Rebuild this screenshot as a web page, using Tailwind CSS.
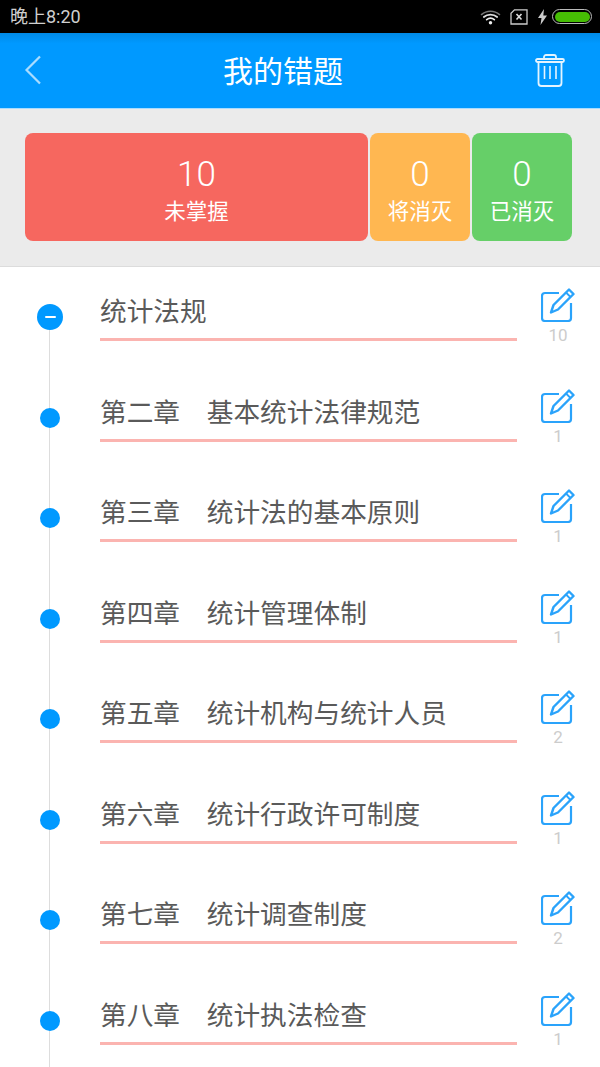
<!DOCTYPE html>
<html lang="zh-CN">
<head>
  <meta charset="UTF-8">
  <meta name="viewport" content="width=device-width,initial-scale=1.0">
  <title>我的错题</title>
  <script src="https://cdn.jsdelivr.net/npm/@tailwindcss/browser@4"></script>
</head>
<body class="bg-white h-[1067px] overflow-hidden font-['Roboto','Noto_Sans_CJK_SC',sans-serif]">
  <!-- Status bar -->
  <div class="h-[33px] bg-black flex items-center justify-between pl-[10px] pr-[8px] text-[#cfcfcf]">
    <span class="text-[18px] leading-none">晚上8:20</span>
    <div class="flex items-center">
      <svg class="w-[21px] h-[16px]" viewBox="0 0 22 16" fill="none" stroke-linecap="round">
        <path d="M1.500 5.500C7 .8 15 .8 20.500 5.500" stroke="#777" stroke-width="1.500"/>
        <path d="M4 8C8 4.600 14 4.600 18 8" stroke="#ddd" stroke-width="1.800"/>
        <path d="M7 10.800C9.500 8.800 12.500 8.800 15 10.800" stroke="#eee" stroke-width="1.800"/>
        <circle cx="11" cy="14" r="1.800" fill="#eee"/>
      </svg>
      <svg class="w-[18px] h-[16px] ml-[9px]" viewBox="0 0 18 16" fill="none">
        <path d="M4.500 .8H17V15H1V4.300Z" stroke="#ccc" stroke-width="1.300"/>
        <path d="M6.500 5 11.500 10.500M11.500 5 6.500 10.500" stroke="#ddd" stroke-width="1.600"/>
      </svg>
      <svg class="w-[9px] h-[16px] ml-[10px]" viewBox="0 0 9 16"><path d="M6 0 0 9H3.500L2.500 16 9 6.500H5.300Z" fill="#ccc"/></svg>
      <div class="ml-[5px] w-[40px] h-[15px] rounded-full border border-[#bbb] p-[1.500px]">
        <div class="h-full rounded-full bg-[#46bd04]"></div>
      </div>
    </div>
  </div>

  <!-- Header -->
  <div class="h-[75px] bg-gradient-to-b from-[#008ae6] from-0% to-[#0099ff] to-[14%] flex items-center justify-between pl-[24px] pr-[35px] pb-[2px]">
    <svg class="w-[18px] h-[30px]" viewBox="0 0 18 30" fill="none"><path d="M16 1.500 2.500 15 16 28.500" stroke="#a9dcff" stroke-width="2.200"/></svg>
    <h1 class="text-[30px] leading-none text-white mr-[11px] mt-[4px]">我的错题</h1>
    <svg class="w-[30px] h-[33px] mt-[1px]" viewBox="0 0 30 33" fill="none" stroke="#e4f4ff" stroke-width="1.800">
      <rect x="1" y="5" width="28" height="3" rx="1.500"/>
      <path d="M9 5V3C9 1.800 10 1 11 1H19C20 1 21 1.800 21 3V5M3.500 8V29C3.500 31 5 32 6.500 32H23.500C25 32 26.500 31 26.500 29V8"/>
      <path d="M9.500 12V25M15 12V25M21 12V25" stroke-width="1.600"/>
    </svg>
  </div>

  <!-- Summary -->
  <div class="h-[159px] bg-[#ebebeb] border-t border-t-[#a9dcff] border-b border-b-[#dcdcdc] pl-[25px] pr-[28px] pt-[24px]">
    <div class="flex gap-[2px] h-[108px] text-white text-center">
      <div class="w-[343px] bg-[#f6675f] rounded-[8px] pt-[22px]">
        <div class="text-[35px] leading-[40px] font-light">10</div>
        <div class="text-[21.500px] leading-[30px] mt-[2px]">未掌握</div>
      </div>
      <div class="w-[100px] bg-[#ffb751] rounded-[8px] pt-[22px]">
        <div class="text-[35px] leading-[40px] font-light">0</div>
        <div class="text-[21.500px] leading-[30px] mt-[2px]">将消灭</div>
      </div>
      <div class="w-[100px] bg-[#66cf68] rounded-[8px] pt-[22px]">
        <div class="text-[35px] leading-[40px] font-light">0</div>
        <div class="text-[21.500px] leading-[30px] mt-[2px]">已消灭</div>
      </div>
    </div>
  </div>

  <!-- Chapter list -->
  <div class="relative h-[800px] overflow-hidden">
    <!-- Timeline -->
    <div class="absolute left-[49px] top-[60px] w-px h-[800px] bg-[#dddddd]"></div>

    <div class="relative h-[100.500px] flex">
      <div class="w-[100px] flex justify-center items-center">
        <div class="w-[26px] h-[26px] rounded-full bg-[#0099ff] flex items-center justify-center">
          <div class="w-[11px] h-[2px] bg-white rounded-full"></div>
        </div>
      </div>
      <div class="w-[417px] h-[74px] border-b-[3px] border-[#fbb4b0] text-[26.700px] leading-[91px] text-[#5a5a5a] whitespace-nowrap">统计法规</div>
      <div class="w-[83px] flex flex-col items-center pt-[21px] pr-[1px]">
        <svg class="w-[34px] h-[34px]" viewBox="0 0 34 34" fill="none"><path d="M18 5H4C2.300 5 1 6.300 1 8V30C1 31.700 2.300 33 4 33H27C28.700 33 30 31.700 30 30V15" stroke="#2aa3fb" stroke-width="2.200"/><path d="M28 1.500 32.500 6 17 21.500 10 24.500 12.500 17Z" stroke="#2aa3fb" stroke-width="2.400" stroke-linejoin="round"/><path d="M25 4.500 29.500 9" stroke="#2aa3fb" stroke-width="1.800"/></svg>
        <span class="text-[17px] leading-[16px] mt-[5px] text-[#cccccc]">10</span>
      </div>
    </div>

    <div class="relative h-[100.500px] flex">
      <div class="w-[100px] flex justify-center items-center"><div class="w-[20px] h-[20px] rounded-full bg-[#0099ff]"></div></div>
      <div class="w-[417px] h-[74px] border-b-[3px] border-[#fbb4b0] text-[26.700px] leading-[91px] text-[#5a5a5a] whitespace-nowrap">第二章　基本统计法律规范</div>
      <div class="w-[83px] flex flex-col items-center pt-[21px] pr-[1px]">
        <svg class="w-[34px] h-[34px]" viewBox="0 0 34 34" fill="none"><path d="M18 5H4C2.300 5 1 6.300 1 8V30C1 31.700 2.300 33 4 33H27C28.700 33 30 31.700 30 30V15" stroke="#2aa3fb" stroke-width="2.200"/><path d="M28 1.500 32.500 6 17 21.500 10 24.500 12.500 17Z" stroke="#2aa3fb" stroke-width="2.400" stroke-linejoin="round"/><path d="M25 4.500 29.500 9" stroke="#2aa3fb" stroke-width="1.800"/></svg>
        <span class="text-[17px] leading-[16px] mt-[5px] text-[#cccccc]">1</span>
      </div>
    </div>

    <div class="relative h-[100.500px] flex">
      <div class="w-[100px] flex justify-center items-center"><div class="w-[20px] h-[20px] rounded-full bg-[#0099ff]"></div></div>
      <div class="w-[417px] h-[74px] border-b-[3px] border-[#fbb4b0] text-[26.700px] leading-[91px] text-[#5a5a5a] whitespace-nowrap">第三章　统计法的基本原则</div>
      <div class="w-[83px] flex flex-col items-center pt-[21px] pr-[1px]">
        <svg class="w-[34px] h-[34px]" viewBox="0 0 34 34" fill="none"><path d="M18 5H4C2.300 5 1 6.300 1 8V30C1 31.700 2.300 33 4 33H27C28.700 33 30 31.700 30 30V15" stroke="#2aa3fb" stroke-width="2.200"/><path d="M28 1.500 32.500 6 17 21.500 10 24.500 12.500 17Z" stroke="#2aa3fb" stroke-width="2.400" stroke-linejoin="round"/><path d="M25 4.500 29.500 9" stroke="#2aa3fb" stroke-width="1.800"/></svg>
        <span class="text-[17px] leading-[16px] mt-[5px] text-[#cccccc]">1</span>
      </div>
    </div>

    <div class="relative h-[100.500px] flex">
      <div class="w-[100px] flex justify-center items-center"><div class="w-[20px] h-[20px] rounded-full bg-[#0099ff]"></div></div>
      <div class="w-[417px] h-[74px] border-b-[3px] border-[#fbb4b0] text-[26.700px] leading-[91px] text-[#5a5a5a] whitespace-nowrap">第四章　统计管理体制</div>
      <div class="w-[83px] flex flex-col items-center pt-[21px] pr-[1px]">
        <svg class="w-[34px] h-[34px]" viewBox="0 0 34 34" fill="none"><path d="M18 5H4C2.300 5 1 6.300 1 8V30C1 31.700 2.300 33 4 33H27C28.700 33 30 31.700 30 30V15" stroke="#2aa3fb" stroke-width="2.200"/><path d="M28 1.500 32.500 6 17 21.500 10 24.500 12.500 17Z" stroke="#2aa3fb" stroke-width="2.400" stroke-linejoin="round"/><path d="M25 4.500 29.500 9" stroke="#2aa3fb" stroke-width="1.800"/></svg>
        <span class="text-[17px] leading-[16px] mt-[5px] text-[#cccccc]">1</span>
      </div>
    </div>

    <div class="relative h-[100.500px] flex">
      <div class="w-[100px] flex justify-center items-center"><div class="w-[20px] h-[20px] rounded-full bg-[#0099ff]"></div></div>
      <div class="w-[417px] h-[74px] border-b-[3px] border-[#fbb4b0] text-[26.700px] leading-[91px] text-[#5a5a5a] whitespace-nowrap">第五章　统计机构与统计人员</div>
      <div class="w-[83px] flex flex-col items-center pt-[21px] pr-[1px]">
        <svg class="w-[34px] h-[34px]" viewBox="0 0 34 34" fill="none"><path d="M18 5H4C2.300 5 1 6.300 1 8V30C1 31.700 2.300 33 4 33H27C28.700 33 30 31.700 30 30V15" stroke="#2aa3fb" stroke-width="2.200"/><path d="M28 1.500 32.500 6 17 21.500 10 24.500 12.500 17Z" stroke="#2aa3fb" stroke-width="2.400" stroke-linejoin="round"/><path d="M25 4.500 29.500 9" stroke="#2aa3fb" stroke-width="1.800"/></svg>
        <span class="text-[17px] leading-[16px] mt-[5px] text-[#cccccc]">2</span>
      </div>
    </div>

    <div class="relative h-[100.500px] flex">
      <div class="w-[100px] flex justify-center items-center"><div class="w-[20px] h-[20px] rounded-full bg-[#0099ff]"></div></div>
      <div class="w-[417px] h-[74px] border-b-[3px] border-[#fbb4b0] text-[26.700px] leading-[91px] text-[#5a5a5a] whitespace-nowrap">第六章　统计行政许可制度</div>
      <div class="w-[83px] flex flex-col items-center pt-[21px] pr-[1px]">
        <svg class="w-[34px] h-[34px]" viewBox="0 0 34 34" fill="none"><path d="M18 5H4C2.300 5 1 6.300 1 8V30C1 31.700 2.300 33 4 33H27C28.700 33 30 31.700 30 30V15" stroke="#2aa3fb" stroke-width="2.200"/><path d="M28 1.500 32.500 6 17 21.500 10 24.500 12.500 17Z" stroke="#2aa3fb" stroke-width="2.400" stroke-linejoin="round"/><path d="M25 4.500 29.500 9" stroke="#2aa3fb" stroke-width="1.800"/></svg>
        <span class="text-[17px] leading-[16px] mt-[5px] text-[#cccccc]">1</span>
      </div>
    </div>

    <div class="relative h-[100.500px] flex">
      <div class="w-[100px] flex justify-center items-center"><div class="w-[20px] h-[20px] rounded-full bg-[#0099ff]"></div></div>
      <div class="w-[417px] h-[74px] border-b-[3px] border-[#fbb4b0] text-[26.700px] leading-[91px] text-[#5a5a5a] whitespace-nowrap">第七章　统计调查制度</div>
      <div class="w-[83px] flex flex-col items-center pt-[21px] pr-[1px]">
        <svg class="w-[34px] h-[34px]" viewBox="0 0 34 34" fill="none"><path d="M18 5H4C2.300 5 1 6.300 1 8V30C1 31.700 2.300 33 4 33H27C28.700 33 30 31.700 30 30V15" stroke="#2aa3fb" stroke-width="2.200"/><path d="M28 1.500 32.500 6 17 21.500 10 24.500 12.500 17Z" stroke="#2aa3fb" stroke-width="2.400" stroke-linejoin="round"/><path d="M25 4.500 29.500 9" stroke="#2aa3fb" stroke-width="1.800"/></svg>
        <span class="text-[17px] leading-[16px] mt-[5px] text-[#cccccc]">2</span>
      </div>
    </div>

    <div class="relative h-[100.500px] flex">
      <div class="w-[100px] flex justify-center items-center"><div class="w-[20px] h-[20px] rounded-full bg-[#0099ff]"></div></div>
      <div class="w-[417px] h-[74px] border-b-[3px] border-[#fbb4b0] text-[26.700px] leading-[91px] text-[#5a5a5a] whitespace-nowrap">第八章　统计执法检查</div>
      <div class="w-[83px] flex flex-col items-center pt-[21px] pr-[1px]">
        <svg class="w-[34px] h-[34px]" viewBox="0 0 34 34" fill="none"><path d="M18 5H4C2.300 5 1 6.300 1 8V30C1 31.700 2.300 33 4 33H27C28.700 33 30 31.700 30 30V15" stroke="#2aa3fb" stroke-width="2.200"/><path d="M28 1.500 32.500 6 17 21.500 10 24.500 12.500 17Z" stroke="#2aa3fb" stroke-width="2.400" stroke-linejoin="round"/><path d="M25 4.500 29.500 9" stroke="#2aa3fb" stroke-width="1.800"/></svg>
        <span class="text-[17px] leading-[16px] mt-[5px] text-[#cccccc]">1</span>
      </div>
    </div>
  </div>
</body>
</html>
